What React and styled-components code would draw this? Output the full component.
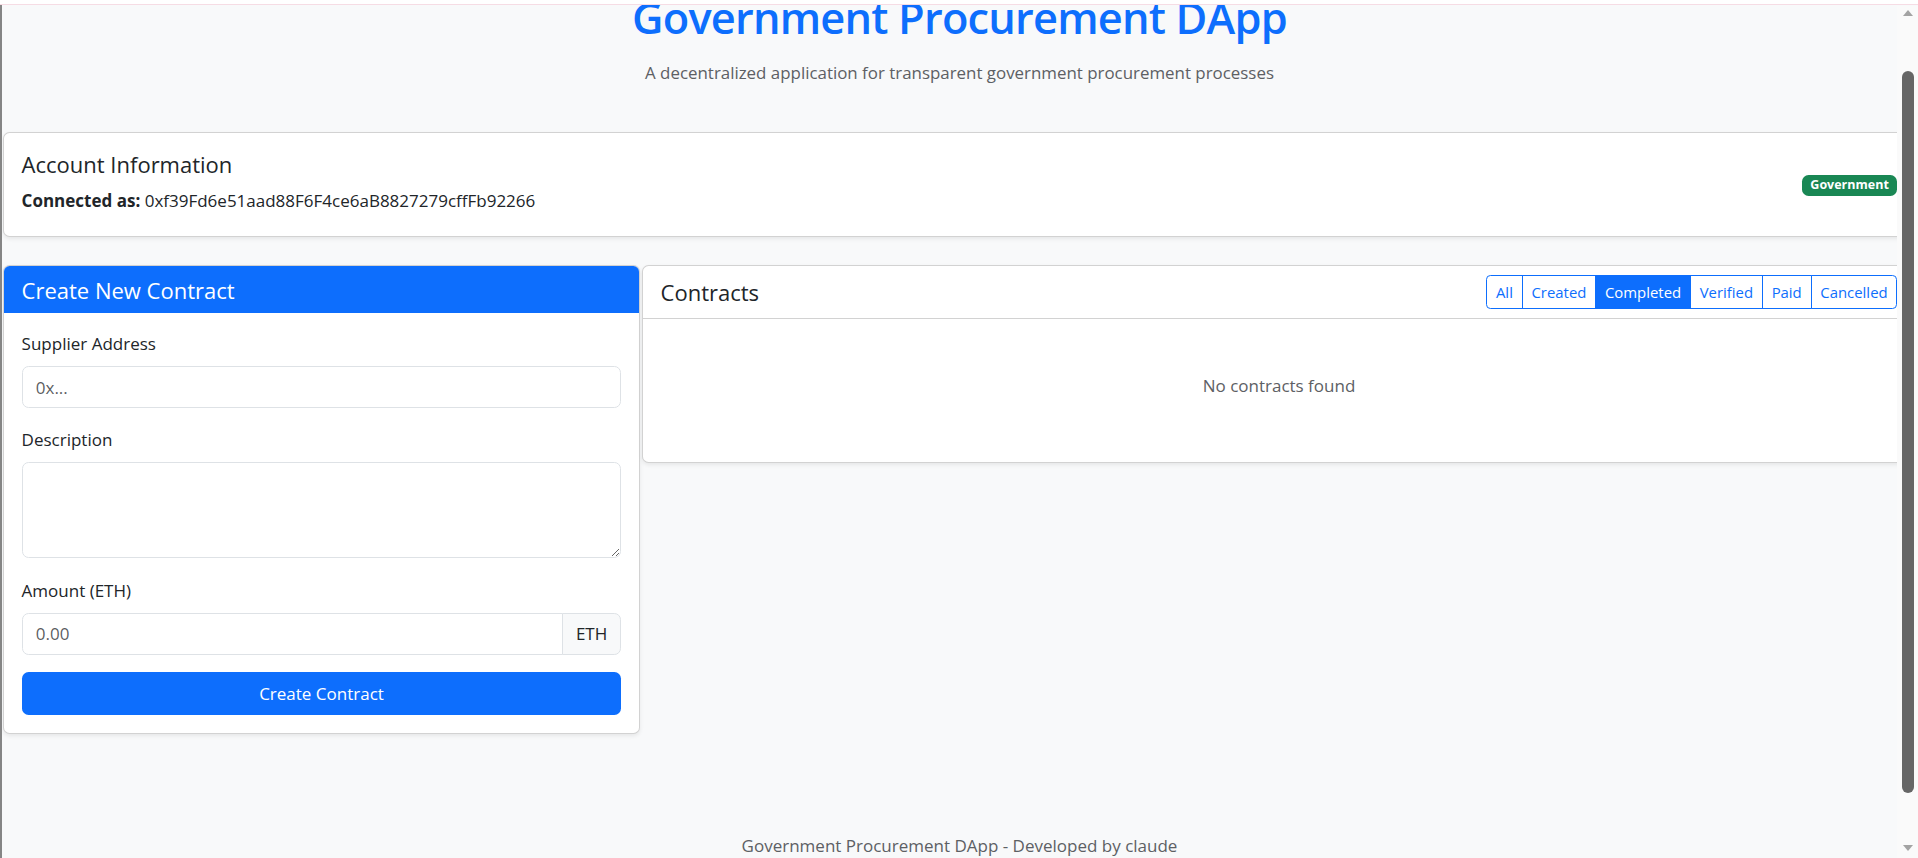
import React from 'react';
import styled, { createGlobalStyle } from 'styled-components';

const FONT = `"Open Sans", "Noto Sans", "Liberation Sans", sans-serif`;
const BLUE = '#0d6efd';
const MUTED = '#5d6064';
const BORDER = 'rgba(0,0,0,0.175)';

const GlobalStyle = createGlobalStyle`
  *, *::before, *::after { box-sizing: border-box; }
  html, body { margin: 0; padding: 0; height: 100%; overflow: hidden; background: #f8f9fa; }
  body { font-family: ${FONT}; font-size: 17px; line-height: 26.4px; color: #212529; }
`;

const Viewport = styled.div`
  height: 858px;
  overflow: hidden;
`;

const Page = styled.div`
  padding: 0 2px 0 3px;
`;

const Header = styled.header`
  text-align: center;
  margin-top: -8px;
`;

const Title = styled.h1`
  margin: 0;
  font-size: 43.4px;
  font-weight: 600;
  letter-spacing: -0.8px;
  line-height: 52.8px;
  color: ${BLUE};
`;

const Subtitle = styled.p`
  margin: 15px 0 0;
  font-size: 16.9px;
  color: ${MUTED};
`;

const Card = styled.section`
  background: #fff;
  border: 1px solid ${BORDER};
  border-radius: 6.6px;
  box-shadow: 0 2px 4px rgba(0, 0, 0, 0.075);
  overflow: hidden;
`;

const AccountCard = styled(Card)`
  margin-top: 46px;
  display: flex;
  justify-content: space-between;
  align-items: center;
  padding: 17.6px 17.6px 22px;
`;

const CardTitle = styled.h5`
  margin: 0;
  font-size: 22px;
  font-weight: 500;
  line-height: 26.4px;
`;

const AccountLine = styled.p`
  margin: 10.8px 0 0;
`;

const Strong = styled.strong`
  font-weight: 700;
`;

const Badge = styled.span`
  display: inline-block;
  margin-top: 6px;
  padding: 4.6px 8.6px;
  font-size: 12.5px;
  font-weight: 700;
  line-height: 1;
  color: #fff;
  background: #198754;
  border-radius: 6.6px;
`;

const Columns = styled.div`
  margin-top: 28px;
  display: grid;
  grid-template-columns: 637px 1fr;
  gap: 2px;
  align-items: start;
`;

const PrimaryHeader = styled.div`
  background: ${BLUE};
  color: #fff;
  padding: 10.3px 17.6px;
  height: 47px;
`;

const CardBody = styled.div`
  padding: 17.6px;
`;

const Field = styled.div`
  margin-bottom: ${(p) => p.$gap || '17.6px'};
`;

const Label = styled.label`
  display: block;
  margin-bottom: 8.8px;
`;

const controlStyles = `
  display: block;
  width: 100%;
  padding: 6.6px 13.2px;
  font-family: ${FONT};
  font-size: 17px;
  line-height: 26.4px;
  color: #212529;
  background: #fff;
  border: 1px solid #dee2e6;
  border-radius: 6.6px;
  outline: none;
  &::placeholder { color: rgba(33, 37, 41, 0.75); }
`;

const Input = styled.input`
  ${controlStyles}
  height: 41.8px;
`;

const TextArea = styled.textarea`
  ${controlStyles}
  height: 96px;
  resize: vertical;
`;

const InputGroup = styled.div`
  display: flex;
  & > input {
    flex: 1;
    border-top-right-radius: 0;
    border-bottom-right-radius: 0;
  }
`;

const Addon = styled.span`
  display: flex;
  align-items: center;
  padding: 6.6px 13.2px;
  margin-left: -1px;
  background: #f8f9fa;
  border: 1px solid #dee2e6;
  border-radius: 0 6.6px 6.6px 0;
  height: 41.8px;
`;

const SubmitButton = styled.button`
  display: block;
  width: 100%;
  height: 43px;
  margin-top: 17.6px;
  font-family: ${FONT};
  font-size: 17px;
  color: #fff;
  background: ${BLUE};
  border: none;
  border-radius: 6.6px;
`;

const ListHeader = styled.div`
  display: flex;
  justify-content: space-between;
  align-items: center;
  height: 53px;
  padding: 0 17.6px;
  border-bottom: 1px solid ${BORDER};
`;

const FilterGroup = styled.div`
  display: inline-flex;
`;

const FilterButton = styled.button`
  padding: 4.4px 8.8px;
  margin-left: -1px;
  font-family: ${FONT};
  font-size: 14.9px;
  line-height: 23.1px;
  color: ${(p) => (p.$active ? '#fff' : BLUE)};
  background: ${(p) => (p.$active ? BLUE : '#fff')};
  border: 1px solid ${BLUE};
  border-radius: 0;
  &:first-child { margin-left: 0; border-radius: 4.4px 0 0 4.4px; }
  &:last-child { border-radius: 0 4.4px 4.4px 0; }
`;

const Empty = styled.p`
  margin: 0;
  padding: 54px 17.6px 62px;
  text-align: center;
  color: ${MUTED};
`;

const Footer = styled.footer`
  margin-top: 99px;
  text-align: center;
  color: ${MUTED};
`;

const TopEdge = styled.div`
  position: fixed;
  top: 0;
  left: 0;
  right: 0;
  height: 5px;
  background: #fff;
  border-bottom: 1px solid #f6dce4;
  z-index: 5;
`;

const LeftEdge = styled.div`
  position: fixed;
  top: 5px;
  left: 0;
  bottom: 0;
  width: 2px;
  background: #858585;
  z-index: 5;
`;

const Scrollbar = styled.div`
  position: fixed;
  top: 6px;
  right: 0;
  bottom: 0;
  width: 21px;
  background: #fafafa;
  z-index: 4;
`;

const Thumb = styled.div`
  position: absolute;
  top: 65px;
  left: 5px;
  width: 12px;
  height: 722px;
  border-radius: 6px;
  background: #666;
`;

const Arrow = styled.div`
  position: absolute;
  left: 6px;
  width: 0;
  height: 0;
  border-left: 5px solid transparent;
  border-right: 5px solid transparent;
  ${(p) =>
    p.$down
      ? `bottom: 7px; border-top: 6px solid #a3a3a3;`
      : `top: 4px; border-bottom: 6px solid #a3a3a3;`}
`;

const FILTERS = ['All', 'Created', 'Completed', 'Verified', 'Paid', 'Cancelled'];

export default function App() {
  return (
    <Viewport>
      <GlobalStyle />
      <TopEdge />
      <LeftEdge />
      <Scrollbar>
        <Arrow />
        <Thumb />
        <Arrow $down />
      </Scrollbar>
      <Page>
        <Header>
          <Title>Government Procurement DApp</Title>
          <Subtitle>A decentralized application for transparent government procurement processes</Subtitle>
        </Header>

        <AccountCard>
          <div>
            <CardTitle>Account Information</CardTitle>
            <AccountLine>
              <Strong>Connected as:</Strong> 0xf39Fd6e51aad88F6F4ce6aB8827279cffFb92266
            </AccountLine>
          </div>
          <Badge>Government</Badge>
        </AccountCard>

        <Columns>
          <Card>
            <PrimaryHeader>
              <CardTitle>Create New Contract</CardTitle>
            </PrimaryHeader>
            <CardBody>
              <Field $gap="18.6px">
                <Label>Supplier Address</Label>
                <Input placeholder="0x..." />
              </Field>
              <Field $gap="20px">
                <Label>Description</Label>
                <TextArea rows={3} />
              </Field>
              <Label>Amount (ETH)</Label>
              <InputGroup>
                <Input placeholder="0.00" />
                <Addon>ETH</Addon>
              </InputGroup>
              <SubmitButton>Create Contract</SubmitButton>
            </CardBody>
          </Card>

          <Card>
            <ListHeader>
              <CardTitle>Contracts</CardTitle>
              <FilterGroup>
                {FILTERS.map((f) => (
                  <FilterButton key={f} $active={f === 'Completed'}>{f}</FilterButton>
                ))}
              </FilterGroup>
            </ListHeader>
            <Empty>No contracts found</Empty>
          </Card>
        </Columns>

        <Footer>Government Procurement DApp - Developed by claude</Footer>
      </Page>
    </Viewport>
  );
}
